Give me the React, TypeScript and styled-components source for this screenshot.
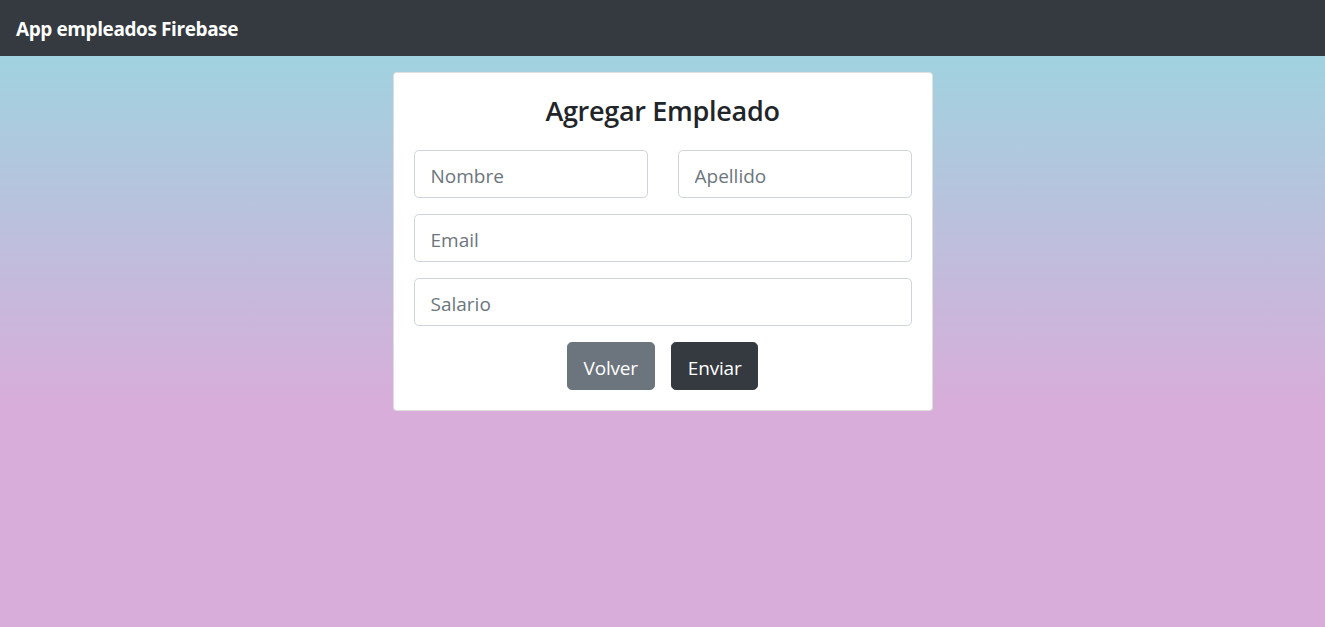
import React from "react";
import styled, { createGlobalStyle } from "styled-components";

const GlobalStyle = createGlobalStyle`
  * { box-sizing: border-box; }
  html, body { margin: 0; padding: 0; }
  body {
    font-family: "Open Sans", "Noto Sans", "Liberation Sans", sans-serif;
    color: #212529;
    background: #d9add9;
  }
`;

const Page = styled.div`
  min-height: 100vh;
  background: #d9add9;
`;

const Navbar = styled.nav`
  height: 56px;
  background: #343a40;
  display: flex;
  align-items: center;
  padding: 2px 16px 0;
`;

const Brand = styled.span`
  color: #fff;
  font-size: 19px;
  font-weight: 700;
  letter-spacing: -0.4px;
`;

const Main = styled.main`
  background: linear-gradient(to bottom, #a0d2e0 0%, #d9add9 100%);
  padding-top: 16px;
  display: flex;
  justify-content: center;
`;

const Card = styled.form`
  width: 540px;
  background: #fff;
  border: 1px solid rgba(0, 0, 0, 0.125);
  border-radius: 4px;
  padding: 20px;
  display: flex;
  flex-direction: column;
  gap: 16px;
`;

const Title = styled.h3`
  margin: 2px 0 7px;
  font-size: 27px;
  font-weight: 600;
  line-height: 1.2;
  text-align: center;
  letter-spacing: -0.3px;
`;

const Row = styled.div`
  display: grid;
  grid-template-columns: 1fr 1fr;
  column-gap: 30px;
`;

const Input = styled.input`
  width: 100%;
  height: 48px;
  padding: 10px 16px 6px;
  font-family: inherit;
  font-size: 19px;
  color: #495057;
  background: #fff;
  border: 1px solid #ced4da;
  border-radius: 4.8px;
  outline: none;
  &::placeholder {
    color: #6c757d;
    opacity: 1;
  }
`;

const Actions = styled.div`
  display: flex;
  justify-content: center;
  gap: 16px;
`;

const Button = styled.button<{ $variant: "secondary" | "dark" }>`
  height: 48px;
  padding: 10px 16px 6px;
  font-family: inherit;
  font-size: 19px;
  letter-spacing: -0.2px;
  color: #fff;
  border: 1px solid ${(p) => (p.$variant === "dark" ? "#343a40" : "#6c757d")};
  background: ${(p) => (p.$variant === "dark" ? "#343a40" : "#6c757d")};
  border-radius: 4.8px;
  cursor: pointer;
`;

export default function App() {
  return (
    <Page>
      <GlobalStyle />
      <Navbar>
        <Brand>App empleados Firebase</Brand>
      </Navbar>
      <Main>
        <Card onSubmit={(e) => e.preventDefault()}>
          <Title>Agregar Empleado</Title>
          <Row>
            <Input placeholder="Nombre" />
            <Input placeholder="Apellido" />
          </Row>
          <Input placeholder="Email" />
          <Input placeholder="Salario" />
          <Actions>
            <Button type="button" $variant="secondary">Volver</Button>
            <Button type="submit" $variant="dark">Enviar</Button>
          </Actions>
        </Card>
      </Main>
    </Page>
  );
}
